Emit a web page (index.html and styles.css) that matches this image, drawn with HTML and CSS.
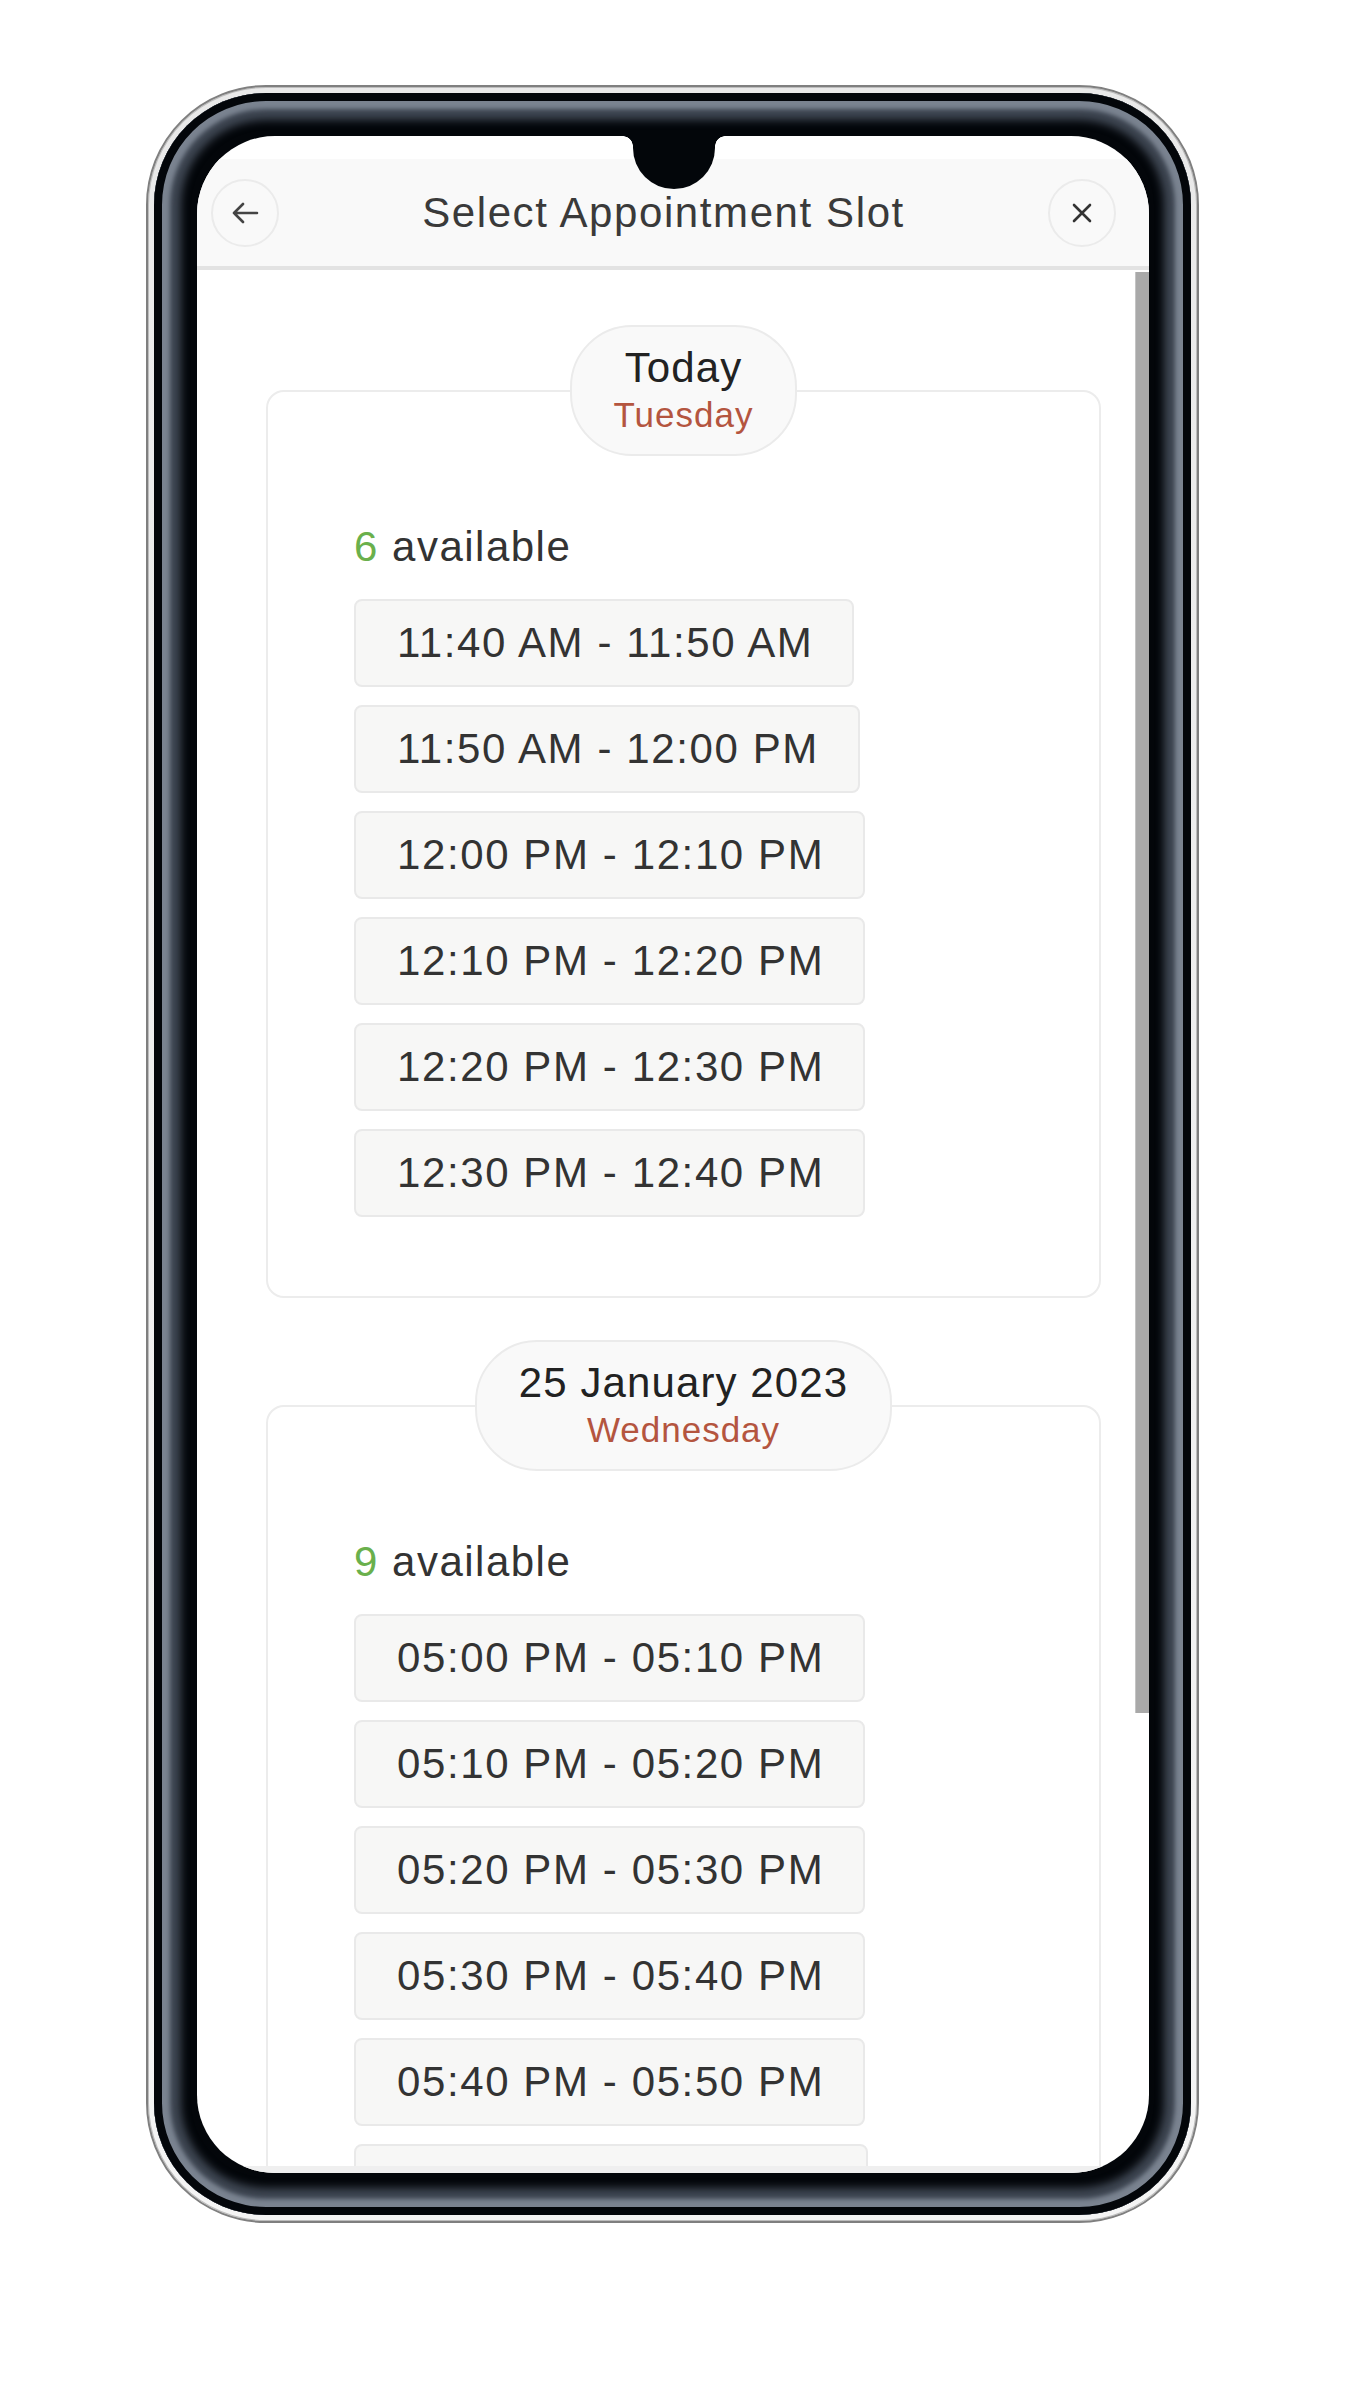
FILE: index.html
```html
<!DOCTYPE html>
<html lang="en">
<head>
<meta charset="utf-8">
<title>Select Appointment Slot</title>
<link rel="stylesheet" href="styles.css">
</head>
<body>
<div class="phone">
  <div class="bezel">
    <div class="screen">
      <div class="notch"></div>
      <header class="modal-header">
        <button class="round-btn" aria-label="Back">
          <svg width="28" height="24" viewBox="0 0 28 24"><path d="M26 12H3M12 3L3 12l9 9" fill="none" stroke="#444" stroke-width="2.6" stroke-linecap="round" stroke-linejoin="round"/></svg>
        </button>
        <h1 class="title">Select Appointment Slot</h1>
        <button class="round-btn" aria-label="Close">
          <svg width="22" height="20" viewBox="0 0 22 20"><path d="M3 2l16 16M19 2L3 18" fill="none" stroke="#333" stroke-width="2.6" stroke-linecap="round"/></svg>
        </button>
      </header>
      <div class="main">
        <div class="content">
          <section class="day-card">
            <div class="pill-row">
              <div class="pill">
                <div class="pill-date">Today</div>
                <div class="pill-day">Tuesday</div>
              </div>
            </div>
            <div class="day-body">
              <p class="avail"><span class="count">6</span> available</p>
              <div class="slots">
                <div class="slot">11:40 AM - 11:50 AM</div>
                <div class="slot">11:50 AM - 12:00 PM</div>
                <div class="slot">12:00 PM - 12:10 PM</div>
                <div class="slot">12:10 PM - 12:20 PM</div>
                <div class="slot">12:20 PM - 12:30 PM</div>
                <div class="slot">12:30 PM - 12:40 PM</div>
              </div>
            </div>
          </section>
          <section class="day-card">
            <div class="pill-row">
              <div class="pill">
                <div class="pill-date">25 January 2023</div>
                <div class="pill-day">Wednesday</div>
              </div>
            </div>
            <div class="day-body">
              <p class="avail"><span class="count">9</span> available</p>
              <div class="slots">
                <div class="slot">05:00 PM - 05:10 PM</div>
                <div class="slot">05:10 PM - 05:20 PM</div>
                <div class="slot">05:20 PM - 05:30 PM</div>
                <div class="slot">05:30 PM - 05:40 PM</div>
                <div class="slot">05:40 PM - 05:50 PM</div>
                <div class="slot slot-partial"></div>
              </div>
            </div>
          </section>
        </div>
        <div class="scrollbar"><div class="thumb"></div></div>
      </div>
      <div class="footer-strip"></div>
    </div>
  </div>
</div>
</body>
</html>
```
FILE: styles.css
```css
* { box-sizing: border-box; }
html, body { margin: 0; padding: 0; background: #ffffff; }
body {
  font-family: "Liberation Sans", Arial, sans-serif;
  color: #333;
}
.phone {
  width: 1053px;
  height: 2138px;
  margin: 85px auto 0;
  border: 2px solid #7f7f7f;
  padding: 6px;
  border-radius: 120px;
  background: linear-gradient(#e9e9e9, #f4f4f4);
  box-shadow: inset 0 0 0 1px #bdbdbd;
}
.bezel {
  height: 100%;
  border-radius: 112px;
  background: #03060a;
  padding: 43px 42px 42px 43px;
  box-shadow: inset 0 0 0 8px #03060a, inset 0 0 4px 16px #7a8390, inset 0 0 8px 27px #3f4753;
}
.screen {
  position: relative;
  height: 100%;
  border-radius: 78px;
  background: #fff;
  overflow: hidden;
  display: flex;
  flex-direction: column;
  padding-top: 23px;
}
.notch {
  position: absolute;
  top: 0;
  left: 50%;
  margin-left: -40px;
  width: 82px;
  height: 53px;
  background: #03060a;
  border-radius: 0 0 41px 41px;
  z-index: 5;
}
.notch::before, .notch::after {
  content: "";
  position: absolute;
  top: 0;
  width: 10px;
  height: 10px;
}
.notch::before {
  left: -10px;
  background: radial-gradient(circle at 0 100%, transparent 9.5px, #03060a 10px);
}
.notch::after {
  right: -10px;
  background: radial-gradient(circle at 100% 100%, transparent 9.5px, #03060a 10px);
}
.modal-header {
  flex: 0 0 auto;
  height: 111px;
  background: #f9f9f9;
  border-bottom: 4px solid #e3e3e3;
  display: flex;
  align-items: center;
  padding: 0 33px 0 14px;
}
.round-btn {
  flex: 0 0 auto;
  width: 68px;
  height: 68px;
  border-radius: 50%;
  border: 2px solid #ebebeb;
  background: transparent;
  display: flex;
  align-items: center;
  justify-content: center;
  padding: 0;
}
.title {
  flex: 1;
  margin: 0;
  text-align: center;
  font-weight: normal;
  font-size: 42px;
  line-height: 48px;
  letter-spacing: 1.6px;
  color: #3a3a3a;
}
.main {
  flex: 1;
  display: flex;
  min-height: 0;
}
.content {
  flex: 1;
  overflow: hidden;
  padding: 120px 34px 0 69px;
}
.scrollbar {
  flex: 0 0 14px;
  padding-top: 2px;
}
.thumb {
  height: 1441px;
  background: #a9a9a9;
  border-left: 1px solid #c4c4c4;
}
.footer-strip {
  flex: 0 0 7px;
  background: #efefef;
}
.day-card {
  border: 2px solid #ececec;
  border-radius: 18px;
  padding-bottom: 79px;
}
.day-card + .day-card { margin-top: 107px; }
.pill-row {
  display: flex;
  justify-content: center;
  margin-top: -67px;
}
.pill {
  background: #f9f9f9;
  border: 2px solid #ebebeb;
  border-radius: 62px;
  padding: 17px 42px;
  text-align: center;
}
.pill-date {
  font-size: 42px;
  line-height: 48px;
  letter-spacing: 1.1px;
  color: #222;
}
.pill-day {
  font-size: 35px;
  line-height: 45px;
  letter-spacing: 1px;
  color: #b4553f;
}
.day-body { padding-left: 86px; }
.avail {
  margin: 67px 0 28px;
  font-size: 42px;
  line-height: 48px;
  letter-spacing: 1.5px;
  color: #333;
}
.count { color: #6ab04c; }
.slots {
  display: flex;
  flex-direction: column;
  align-items: flex-start;
  gap: 18px;
}
.slot {
  background: #f7f7f6;
  border: 2px solid #e9e9e9;
  border-radius: 8px;
  padding: 18px 39px 18px 41px;
  font-size: 42px;
  line-height: 48px;
  letter-spacing: 1.6px;
  color: #333;
  white-space: nowrap;
}
.slot-partial {
  width: 514px;
  height: 88px;
}
```
